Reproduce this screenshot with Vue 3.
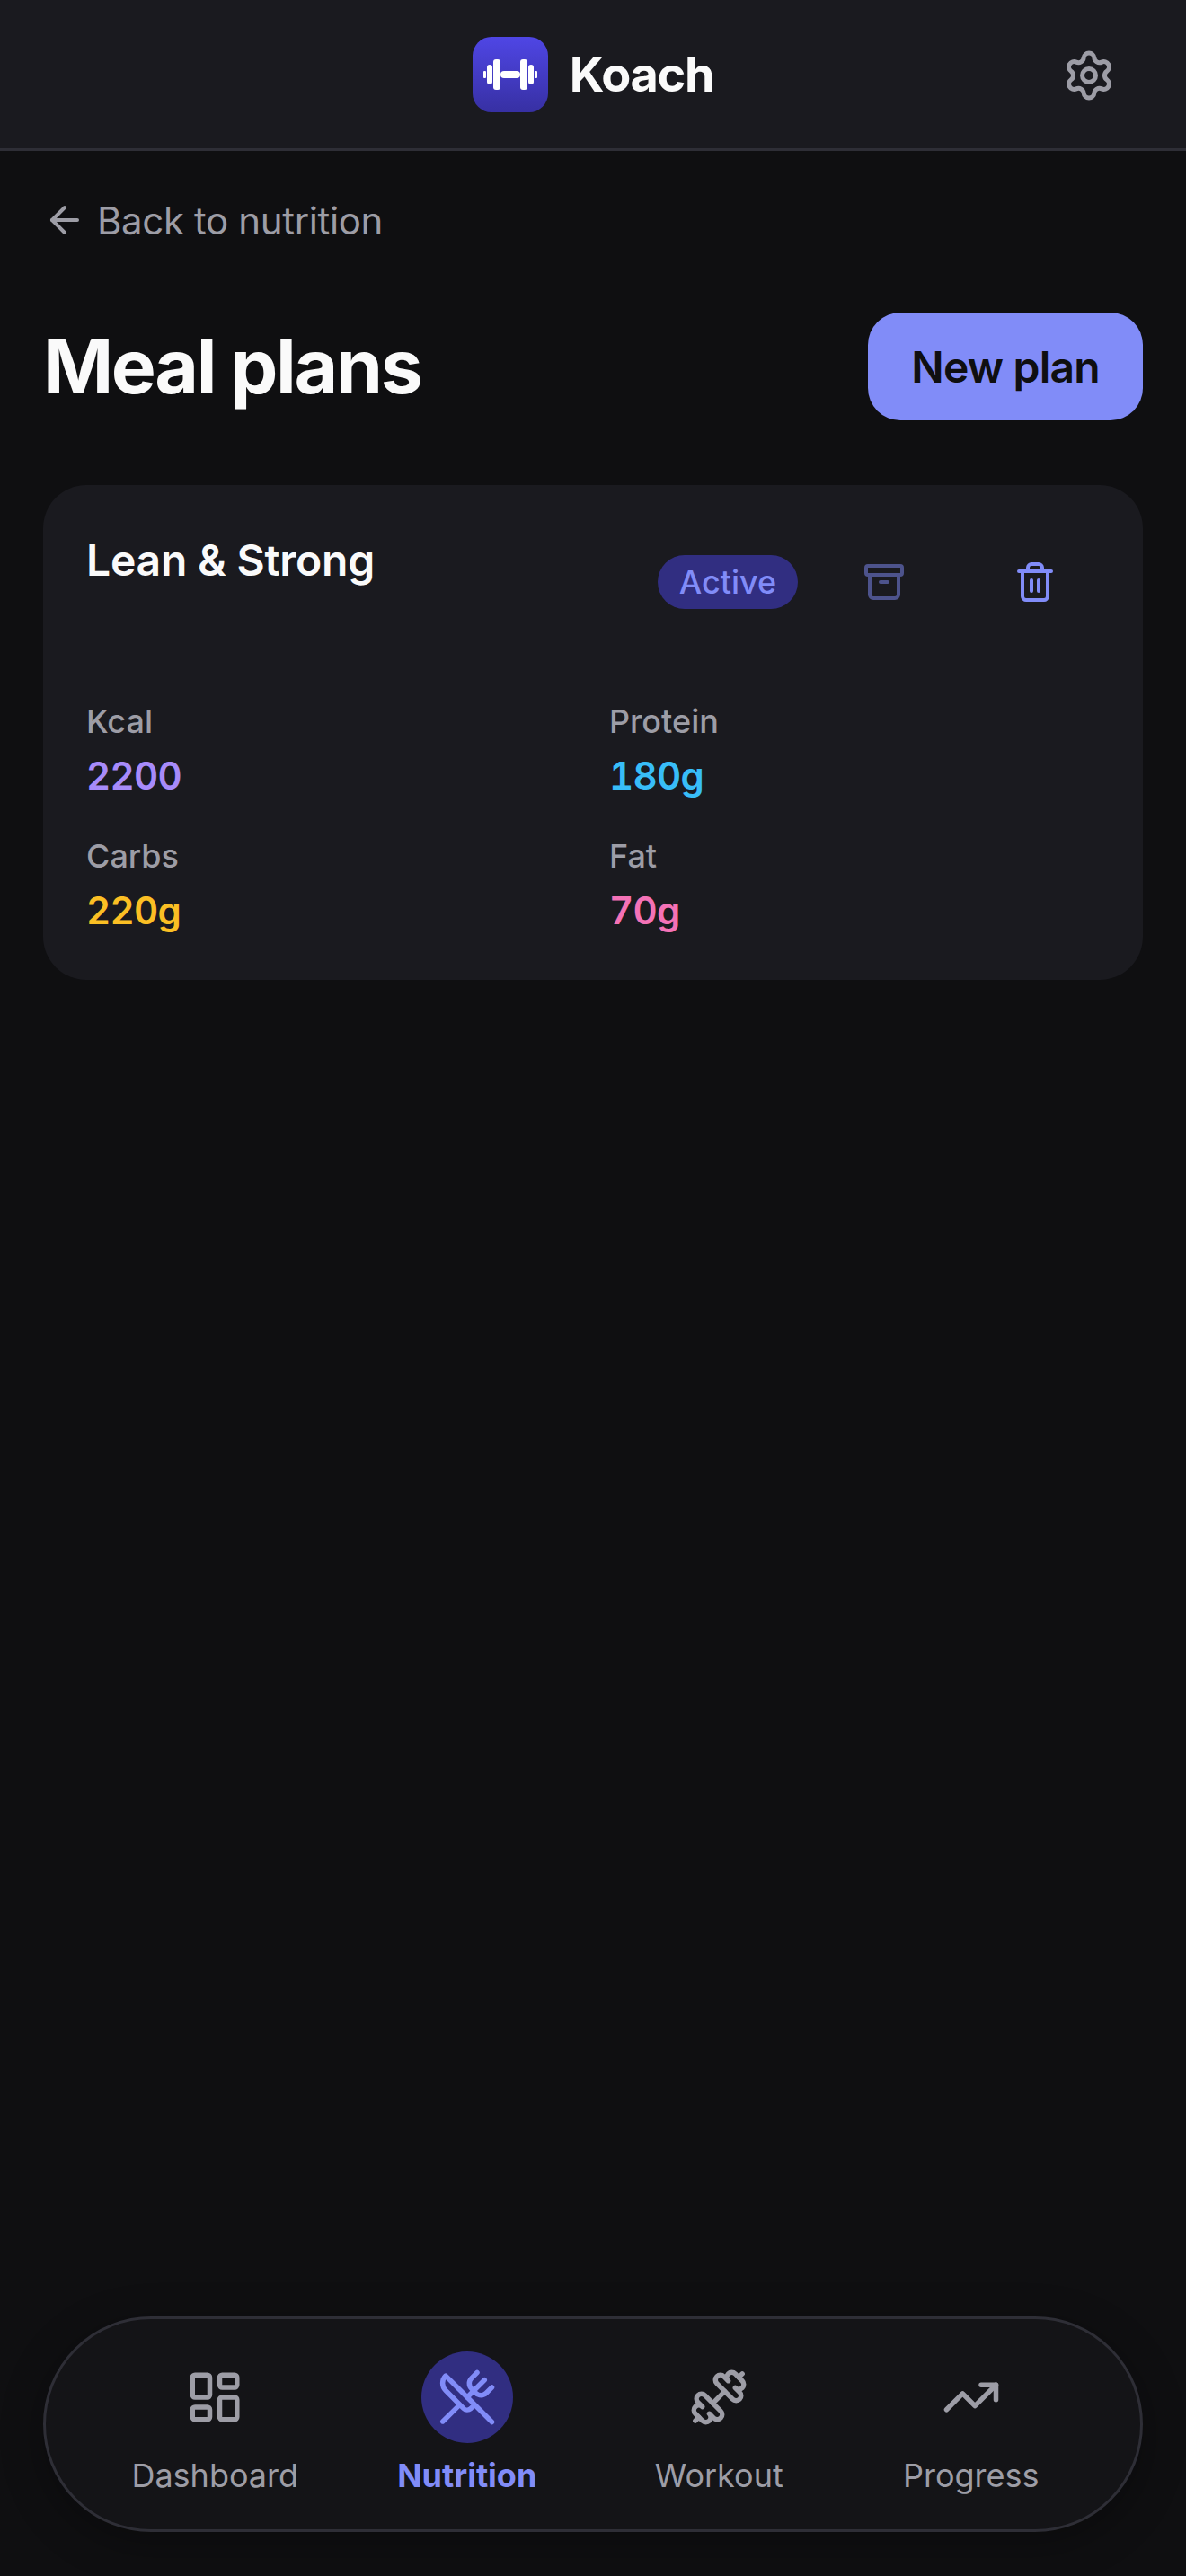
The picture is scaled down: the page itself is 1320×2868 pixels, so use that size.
<template>
  <div class="page">
    <header class="topbar">
      <div class="brand">
        <div class="brand__logo">
          <svg width="84" height="84" viewBox="0 0 84 84" fill="#fff">
            <rect x="12" y="38" width="3" height="8" rx="1" />
            <rect x="16" y="31" width="6" height="22" rx="3" />
            <rect x="23" y="25" width="8" height="34" rx="3" />
            <rect x="31" y="38" width="22" height="8" rx="4" />
            <rect x="53" y="25" width="8" height="34" rx="3" />
            <rect x="62" y="31" width="6" height="22" rx="3" />
            <rect x="69" y="38" width="3" height="8" rx="1" />
          </svg>
        </div>
        <span class="brand__name">Koach</span>
      </div>
      <button class="topbar__settings" type="button" aria-label="Settings">
        <svg class="icon" width="60" height="60" viewBox="0 0 24 24">
          <path d="M9.671 4.136a2.34 2.34 0 0 1 4.659 0 2.34 2.34 0 0 0 3.319 1.915 2.34 2.34 0 0 1 2.33 4.033 2.34 2.34 0 0 0 0 3.831 2.34 2.34 0 0 1-2.33 4.033 2.34 2.34 0 0 0-3.319 1.915 2.34 2.34 0 0 1-4.659 0 2.34 2.34 0 0 0-3.32-1.915 2.34 2.34 0 0 1-2.33-4.033 2.34 2.34 0 0 0 0-3.831A2.34 2.34 0 0 1 6.35 6.051a2.34 2.34 0 0 0 3.319-1.915" />
          <circle cx="12" cy="12" r="3" />
        </svg>
      </button>
    </header>

    <main class="content">
      <a class="back" href="#">
        <svg class="icon" width="48" height="48" viewBox="0 0 24 24">
          <path d="m12 19-7-7 7-7" />
          <path d="M19 12H5" />
        </svg>
        Back to nutrition
      </a>

      <div class="title-row">
        <h1 class="title">Meal plans</h1>
        <button class="new-plan" type="button">New plan</button>
      </div>

      <section class="plan">
        <div class="plan__head">
          <h2 class="plan__name">Lean &amp; Strong</h2>
          <div class="plan__actions">
            <span class="badge">Active</span>
            <button class="action action--muted" type="button" aria-label="Archive">
              <svg class="icon" width="48" height="48" viewBox="0 0 24 24">
                <rect width="20" height="5" x="2" y="3" rx="1" />
                <path d="M4 8v11a2 2 0 0 0 2 2h12a2 2 0 0 0 2-2V8" />
                <path d="M10 12h4" />
              </svg>
            </button>
            <button class="action" type="button" aria-label="Delete">
              <svg class="icon" width="48" height="48" viewBox="0 0 24 24">
                <path d="M3 6h18" />
                <path d="M19 6v14c0 1-1 2-2 2H7c-1 0-2-1-2-2V6" />
                <path d="M8 6V4c0-1 1-2 2-2h4c1 0 2 1 2 2v2" />
                <path d="M10 11v6" />
                <path d="M14 11v6" />
              </svg>
            </button>
          </div>
        </div>
        <div class="stats">
          <div v-for="stat in stats" :key="stat.label" class="stat">
            <div class="stat__label">{{ stat.label }}</div>
            <div class="stat__value" :class="`stat__value--${stat.tone}`">{{ stat.value }}</div>
          </div>
        </div>
      </section>
    </main>

    <nav class="tabbar">
      <a v-for="tab in tabs" :key="tab.label" class="tab" :class="{ 'tab--active': tab.active }" href="#">
        <span class="tab__icon">
          <svg class="icon" width="66" height="66" viewBox="0 0 24 24">
            <template v-if="tab.label === 'Dashboard'">
              <rect width="7" height="9" x="3" y="3" rx="1" />
              <rect width="7" height="5" x="14" y="3" rx="1" />
              <rect width="7" height="9" x="14" y="12" rx="1" />
              <rect width="7" height="5" x="3" y="16" rx="1" />
            </template>
            <template v-else-if="tab.label === 'Nutrition'">
              <path d="m16 2-2.3 2.3a3 3 0 0 0 0 4.2l1.8 1.8a3 3 0 0 0 4.2 0L22 8" />
              <path d="M15 15 3.3 3.3a4.2 4.2 0 0 0 0 6l7.3 7.3c.7.7 2 .7 2.8 0L15 15Zm0 0 7 7" />
              <path d="m2.1 21.8 6.4-6.3" />
              <path d="m19 5-7 7" />
            </template>
            <template v-else-if="tab.label === 'Workout'">
              <path d="M17.596 12.768a2 2 0 1 0 2.829-2.829l-1.768-1.767a2 2 0 0 0 2.828-2.829l-2.828-2.828a2 2 0 0 0-2.829 2.828l-1.767-1.768a2 2 0 1 0-2.829 2.829z" />
              <path d="m2.5 21.5 1.4-1.4" />
              <path d="m20.1 3.9 1.4-1.4" />
              <path d="M5.343 21.485a2 2 0 1 0 2.829-2.828l1.767 1.768a2 2 0 1 0 2.829-2.829l-6.364-6.364a2 2 0 1 0-2.829 2.829l1.768 1.767a2 2 0 0 0-2.828 2.829z" />
              <path d="m9.6 14.4 4.8-4.8" />
            </template>
            <template v-else>
              <path d="M16 7h6v6" />
              <path d="m22 7-8.5 8.5-5-5L2 17" />
            </template>
          </svg>
        </span>
        <span class="tab__label">{{ tab.label }}</span>
      </a>
    </nav>
  </div>
</template>

<script setup>
const stats = [
  { label: 'Kcal', value: '2200', tone: 'kcal' },
  { label: 'Protein', value: '180g', tone: 'protein' },
  { label: 'Carbs', value: '220g', tone: 'carbs' },
  { label: 'Fat', value: '70g', tone: 'fat' }
]

const tabs = [
  { label: 'Dashboard' },
  { label: 'Nutrition', active: true },
  { label: 'Workout' },
  { label: 'Progress' }
]
</script>

<style>
html,
body {
  margin: 0;
  background: #0f0f11;
}
</style>

<style scoped>
.page {
  width: 1320px;
  height: 2868px;
  display: flex;
  flex-direction: column;
  background: #0f0f11;
  color: #fafafa;
  font-family: Inter, "Liberation Sans", sans-serif;
}

.icon {
  display: block;
  fill: none;
  stroke: currentColor;
  stroke-width: 2;
  stroke-linecap: round;
  stroke-linejoin: round;
}

.topbar {
  height: 165px;
  flex: none;
  position: relative;
  display: flex;
  align-items: center;
  justify-content: center;
  background: #1a1a1f;
  border-bottom: 3px solid #2e2e36;
}

.brand {
  display: flex;
  align-items: center;
  gap: 24px;
}

.brand__logo {
  width: 84px;
  height: 84px;
  border-radius: 21px;
  background: linear-gradient(180deg, #4f46e5, #3730a3);
}

.brand__name {
  font-size: 54px;
  font-weight: 700;
  letter-spacing: -1.35px;
}

.topbar__settings {
  position: absolute;
  right: 78px;
  top: 54px;
  padding: 0;
  border: none;
  background: transparent;
  color: #9d9da6;
}

.content {
  flex: 1;
  padding: 48px 48px 0;
}

.back {
  display: flex;
  align-items: center;
  gap: 12px;
  height: 60px;
  margin-top: -1px;
  color: #9d9da6;
  font-size: 42px;
  letter-spacing: -0.36px;
  text-decoration: none;
}

.title-row {
  display: flex;
  align-items: center;
  justify-content: space-between;
  margin-top: 73px;
}

.title {
  margin: 0;
  font-size: 84px;
  font-weight: 700;
  letter-spacing: -2.4px;
  line-height: 1.2;
}

.new-plan {
  width: 306px;
  height: 120px;
  padding: 0;
  border: none;
  border-radius: 36px;
  background: #818cf8;
  color: #0f0f11;
  font-family: inherit;
  font-size: 48px;
  font-weight: 600;
  letter-spacing: -0.8px;
}

.plan {
  margin-top: 72px;
  padding: 48px 48px 47px;
  border-radius: 48px;
  background: #1a1a1f;
}

.plan__head {
  display: flex;
  justify-content: space-between;
  align-items: flex-start;
}

.plan__name {
  margin: 0;
  font-size: 48px;
  font-weight: 600;
  letter-spacing: -0.2px;
  line-height: 72px;
}

.plan__actions {
  display: flex;
  align-items: center;
  gap: 24px;
  height: 120px;
}

.badge {
  width: 156px;
  height: 60px;
  display: flex;
  align-items: center;
  justify-content: center;
  border-radius: 30px;
  background: #312e81;
  color: #818cf8;
  font-size: 36px;
  font-weight: 500;
}

.action {
  width: 144px;
  height: 120px;
  display: flex;
  align-items: center;
  justify-content: center;
  padding: 0;
  border: none;
  background: transparent;
  color: #818cf8;
}

.action--muted {
  opacity: 0.5;
}

.stats {
  display: grid;
  grid-template-columns: 1fr 1fr;
  column-gap: 36px;
  row-gap: 32px;
  margin-top: 68px;
}

.stat__label {
  color: #9d9da6;
  font-size: 36px;
  font-weight: 500;
  line-height: 54px;
}

.stat__value {
  margin-top: 4px;
  font-size: 42px;
  font-weight: 600;
  font-variant-numeric: tabular-nums;
  letter-spacing: -0.7px;
  line-height: 60px;
}

.stat__value--kcal {
  color: #a78bfa;
}

.stat__value--protein {
  color: #38bdf8;
}

.stat__value--carbs {
  color: #fbbf24;
}

.stat__value--fat {
  color: #f472b6;
}

.tabbar {
  flex: none;
  height: 234px;
  margin: 0 48px 49px;
  padding: 0 48px;
  display: grid;
  grid-template-columns: repeat(4, 1fr);
  border: 3px solid #2e2e36;
  border-radius: 120px;
  background: #141417;
  box-shadow: 0 12px 48px rgba(0, 0, 0, 0.3);
}

.tab {
  display: flex;
  flex-direction: column;
  align-items: center;
  padding-top: 36px;
  color: #9d9da6;
  text-decoration: none;
}

.tab__icon {
  width: 102px;
  height: 102px;
  display: flex;
  align-items: center;
  justify-content: center;
  border-radius: 50%;
}

.tab__label {
  margin-top: 9px;
  font-size: 36px;
  line-height: 54px;
}

.tab--active {
  color: #818cf8;
}

.tab--active .tab__icon {
  background: #312e81;
}

.tab--active .tab__label {
  font-weight: 700;
}
</style>
